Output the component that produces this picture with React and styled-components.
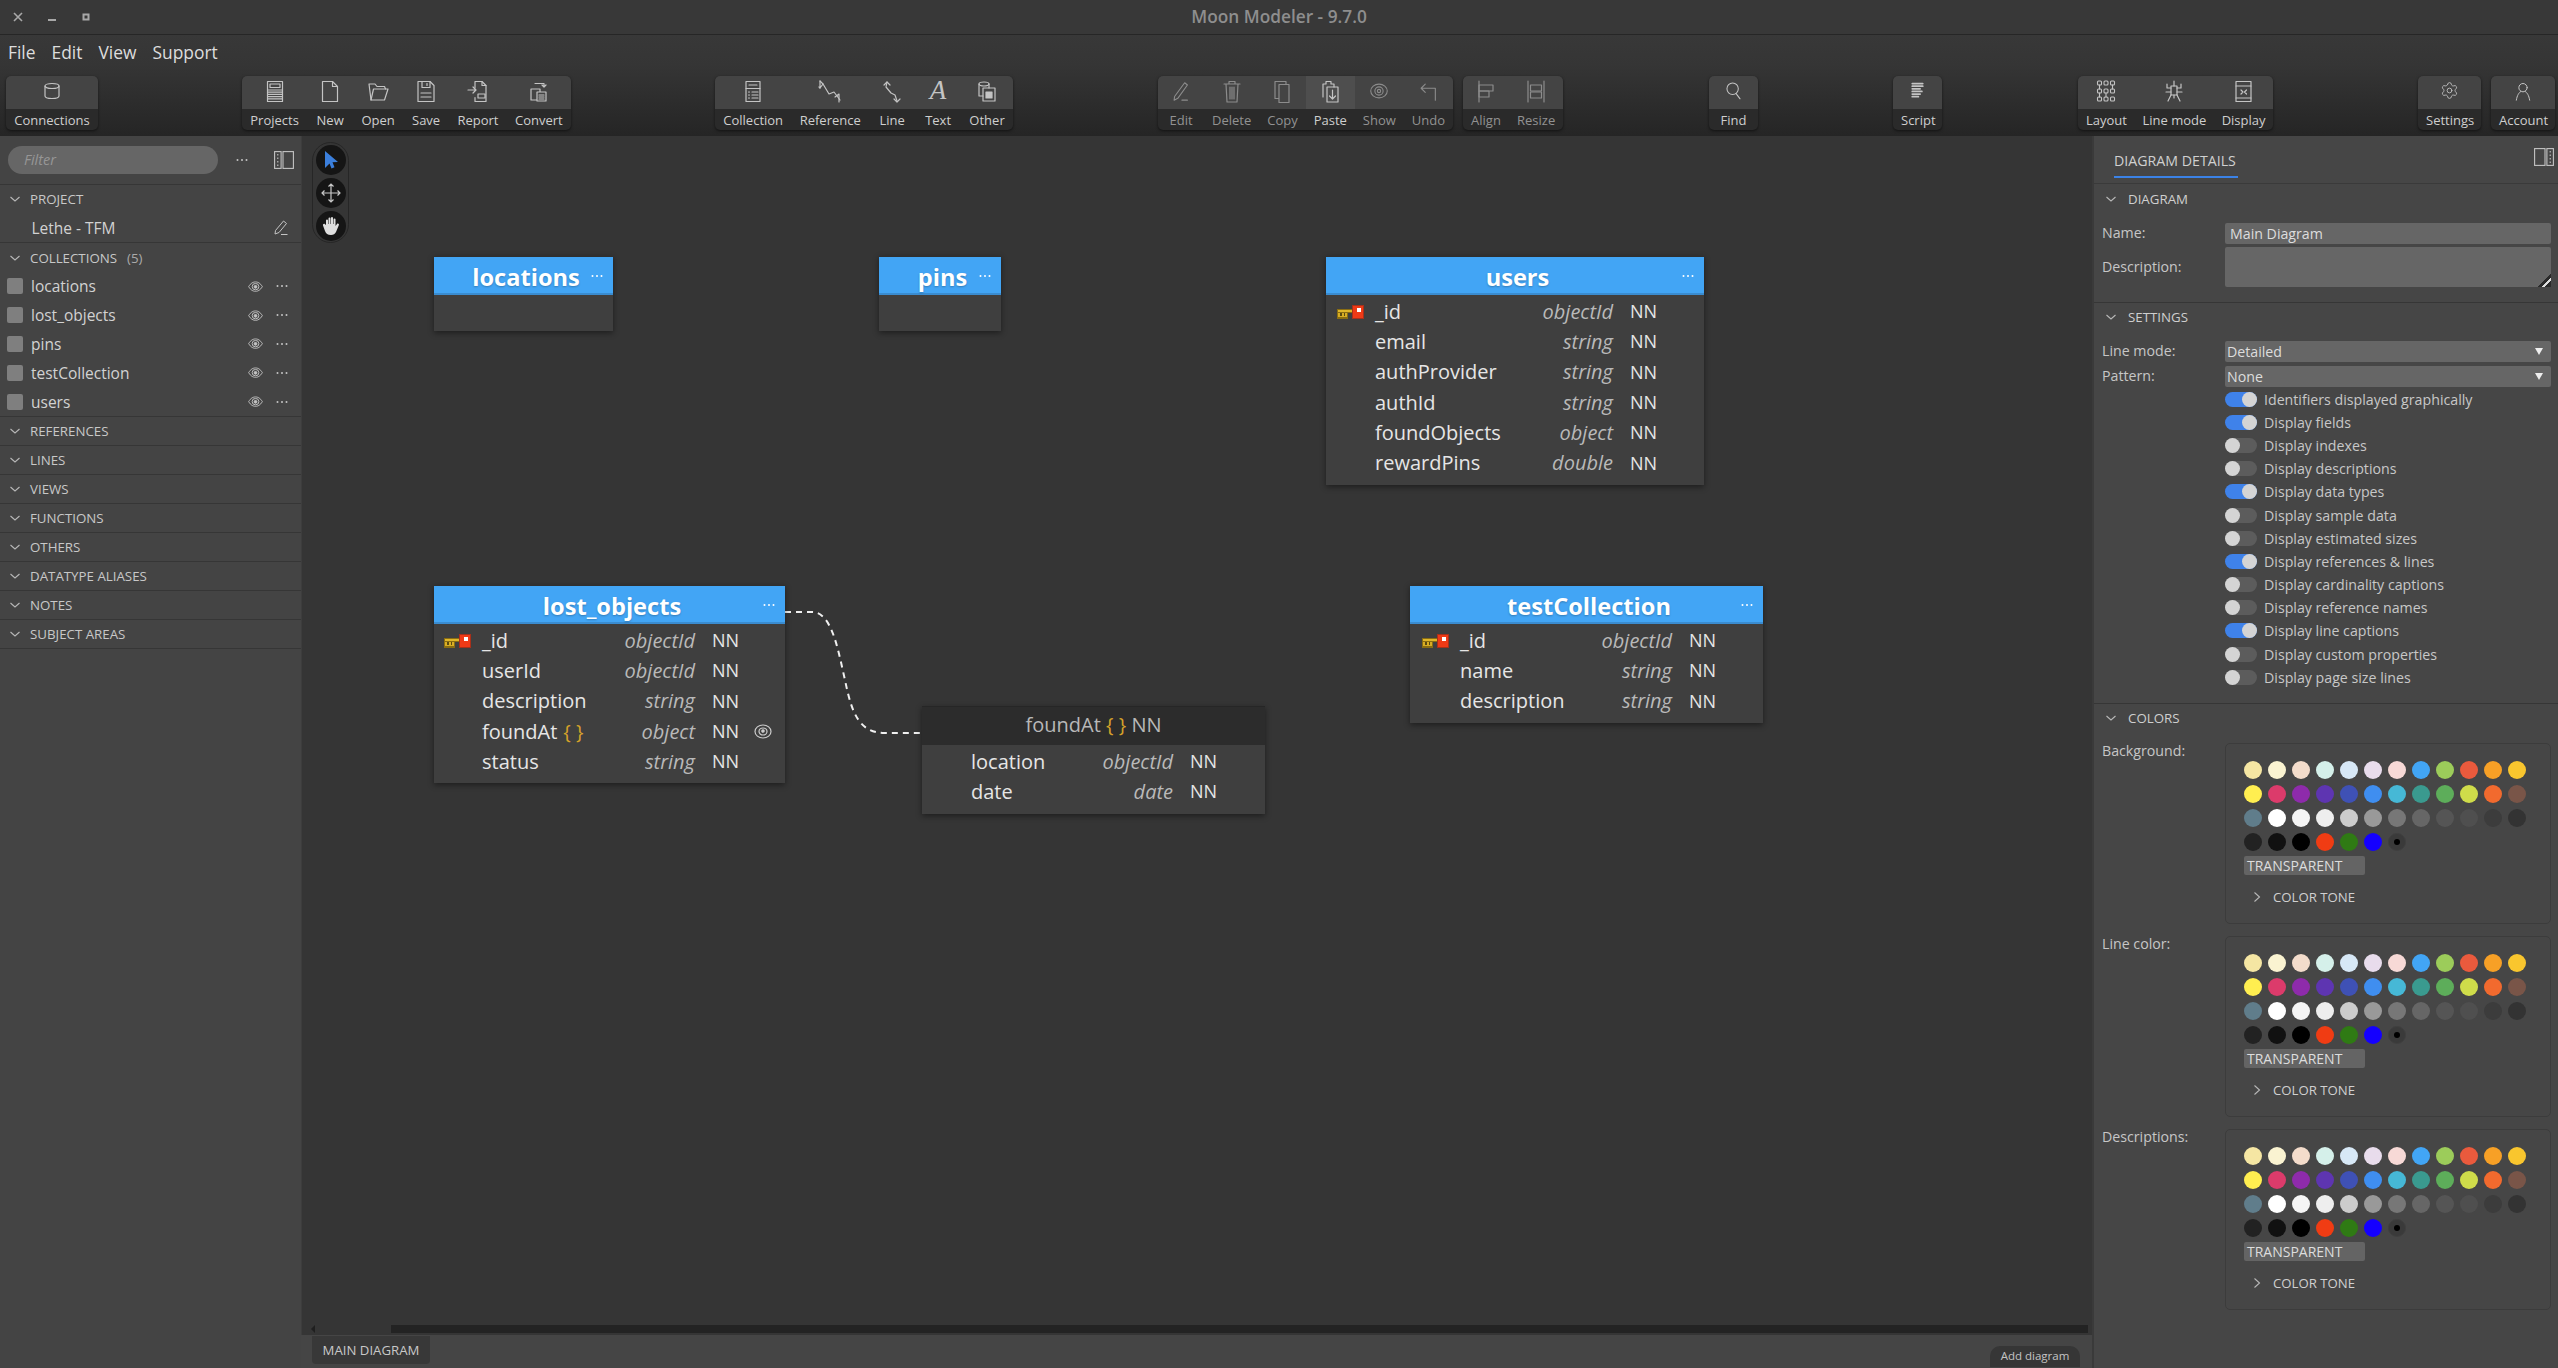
import React from 'react';
import styled, { createGlobalStyle } from 'styled-components';
import { Settings as GearIcon } from 'lucide-react';

const GlobalStyle = createGlobalStyle`
  html, body { margin: 0; height: 100%; background: #353535; overflow: hidden; }
  #root { height: 100%; }
  body { font-family: "Open Sans", "Noto Sans", sans-serif; color: #ccc; }
  * { box-sizing: border-box; }
`;

const Frame = styled.div`display:flex;flex-direction:column;width:2558px;height:1368px;overflow:hidden;`;

/* ---------- title bar ---------- */
const TitleBar = styled.div`
  height:35px;flex:none;display:grid;grid-template-columns:1fr auto 1fr;align-items:center;
  background:#383838;border-bottom:1px solid #262626;
`;
const WindowControls = styled.div`display:flex;padding-left:1px;`;
const WindowButton = styled.span`width:34px;display:flex;justify-content:center;align-items:center;height:16px;color:#a8a8a8;`;
const Title = styled.div`font-size:17.3px;font-weight:600;color:#8e8e8e;padding-bottom:2px;`;

/* ---------- menu + toolbar ---------- */
const TopBars = styled.div`flex:none;background:linear-gradient(#383838 0%,#353535 30%,#252525 100%);`;
const MenuBar = styled.div`height:36px;display:flex;align-items:center;gap:16px;padding:0 0 2px 8px;`;
const MenuItem = styled.span`font-size:17.4px;color:#ddd;`;
const Toolbar = styled.div`display:flex;align-items:flex-start;height:65px;padding:5px 0 0 6px;`;
const ToolGroup = styled.div`
  display:flex;flex:none;height:54px;margin-left:${p => p.$ml || 0}px;width:${p => p.$w}px;
  border-radius:5px;overflow:hidden;background:#2a2a2a;box-shadow:0 1px 3px rgba(0,0,0,.55);
`;
const ToolItem = styled.div`
  display:flex;flex-direction:column;flex:${p => (p.$grow ? '1 1 auto' : 'none')};min-width:46px;
`;
const ToolIcon = styled.div`
  height:33px;padding-bottom:4px;display:flex;align-items:center;justify-content:center;
  background:${p => (p.$active ? '#4e4e4e' : '#444')};
  color:${p => (p.$dim ? '#8c8c8c' : '#c4c4c4')};
`;
const ToolLabel = styled.div`
  height:21px;line-height:23.500px;padding:0 8px;text-align:center;white-space:nowrap;font-size:13px;
  color:${p => (p.$dim ? '#929292' : '#cfcfcf')};
`;
const ToolGlyphA = styled.span`font-family:"Liberation Serif",serif;font-style:italic;font-size:27px;line-height:1;color:#c4c4c4;`;

/* ---------- body ---------- */
const Body = styled.div`flex:1;display:flex;min-height:0;`;
const LeftPanel = styled.aside`width:301px;flex:none;background:#444;display:flex;flex-direction:column;`;
const FilterRow = styled.div`height:49px;display:flex;align-items:center;padding:0 7px 0 8px;border-bottom:1px solid #363636;`;
const FilterBox = styled.div`
  width:210px;height:28px;border-radius:14px;background:#666;padding-left:16px;
  font-style:italic;font-size:14.5px;line-height:28px;color:#969696;
`;
const FilterTools = styled.div`flex:1;display:flex;justify-content:space-between;align-items:center;padding-left:18px;color:#c4c4c4;`;
const TreeSection = styled.div`border-bottom:1px solid #363636;`;
const TreeHeader = styled.div`
  height:${p => (p.$open ? 28.6 : 28)}px;display:flex;align-items:center;gap:10px;padding-left:10px;
  font-size:13.3px;color:#c8c8c8;
`;
const TreeCount = styled.span`color:#aaa;`;
const TreeRow = styled.div`
  height:28.8px;display:flex;align-items:center;padding:0 13px 0 7px;font-size:15.5px;color:#d2d2d2;
`;
const ProjectName = styled.span`flex:1;padding-left:24.5px;`;
const ItemSwatch = styled.span`width:16px;height:16px;border-radius:2px;background:#7f7f7f;margin-right:8px;flex:none;`;
const ItemName = styled.span`flex:1;`;
const ItemTools = styled.span`display:flex;align-items:center;gap:13px;color:#c4c4c4;`;

/* ---------- canvas ---------- */
const CanvasColumn = styled.main`flex:1;min-width:0;display:flex;flex-direction:column;`;
const Canvas = styled.div`flex:1;position:relative;background:#353535;border-left:1px solid #3d3d3d;overflow:hidden;`;
const ToolPill = styled.div`
  position:absolute;left:10px;top:6px;width:37px;height:101px;border-radius:19px;border:1px solid #262626;
  display:flex;flex-direction:column;align-items:center;justify-content:center;gap:3px;
`;
const ToolCircle = styled.div`
  width:30px;height:30px;border-radius:50%;background:#151515;display:flex;align-items:center;justify-content:center;
`;
const LineLayer = styled.svg`position:absolute;inset:0;width:100%;height:100%;pointer-events:none;`;
const TableCard = styled.div`
  position:absolute;left:${p => p.$x}px;top:${p => p.$y}px;width:${p => p.$w}px;
  background:#3f3f3f;box-shadow:0 2px 6px rgba(0,0,0,.45);
`;
const TableHead = styled.div`
  height:39px;position:relative;display:flex;align-items:center;justify-content:center;padding:3px 0 0 5px;
  background:#42a5f5;border-top:1px solid #2f2f2f;border-bottom:2px solid #3a8cd0;
  color:#fff;font-size:23.6px;font-weight:700;text-shadow:0 1px 2px rgba(0,0,0,.25);
`;
const SubHead = styled.div`
  height:39px;padding-bottom:3px;display:flex;align-items:center;justify-content:center;background:#2c2c2c;
  border-top:1px solid #262626;font-size:20px;color:#b8b8b8;
`;
const HeadDots = styled.span`position:absolute;right:10px;top:17px;color:#fff;display:flex;`;
const TableBody = styled.div`
  padding:1px 0 7px;min-height:${p => p.$min || 0}px;
`;
const FieldRow = styled.div`
  height:30.3px;display:flex;align-items:center;position:relative;
  padding-left:${p => p.$left}px;padding-right:${p => p.$right}px;
`;
const KeyMark = styled.span`position:absolute;left:${p => p.$left - 38}px;top:9px;display:flex;`;
const FieldName = styled.span`flex:1;font-size:20px;color:#e6e6e6;white-space:nowrap;`;
const Braces = styled.span`color:#d4a12a;margin-left:${p => (p.$flush ? 0 : 6)}px;`;
const FieldType = styled.span`font-size:20px;font-style:italic;color:#b9b9b9;`;
const FieldNN = styled.span`width:27px;margin-left:17px;font-size:18px;color:#e6e6e6;flex:none;`;
const FieldEye = styled.span`position:absolute;right:13px;top:8px;color:#ccc;display:flex;`;
const ScrollBar = styled.div`position:absolute;left:89px;right:4px;bottom:2px;height:8px;background:#232323;`;
const ScrollArrow = styled.span`
  position:absolute;left:9px;bottom:2px;width:0;height:0;border:4px solid transparent;border-right:4px solid #1f1f1f;border-left:0;
`;
const TabBar = styled.div`
  height:33px;flex:none;display:flex;align-items:center;justify-content:space-between;background:#454545;padding:0 12px 0 11px;
`;
const TabButton = styled.div`
  height:28px;width:118px;margin-top:-3px;text-align:center;line-height:28px;font-size:13.2px;background:#383838;border-radius:0 0 4px 4px;color:#c8c8c8;
`;
const AddDiagram = styled.div`
  height:21px;width:90px;margin-top:10px;text-align:center;line-height:20px;font-size:11.5px;border-radius:10px 10px 0 0;background:#363636;color:#c4c4c4;
`;

/* ---------- right panel ---------- */
const RightPanel = styled.aside`width:466px;flex:none;background:#464646;border-left:2px solid #3a3a3a;display:flex;flex-direction:column;`;
const DetailTabs = styled.div`height:48px;padding-left:20px;display:flex;justify-content:space-between;border-bottom:1px solid #3a3a3a;`;
const DetailTab = styled.div`
  height:42px;padding-top:15px;width:124px;font-size:14.2px;line-height:20px;white-space:nowrap;color:#d0d0d0;border-bottom:2px solid #3b82e6;
`;
const PanelIconSlot = styled.div`padding:12px 4px 0 0;color:#c4c4c4;`;
const DetailSection = styled.section`
  padding-bottom:${p => p.$pb || 0}px;border-bottom:${p => (p.$last ? 'none' : '1px solid #363636')};
`;
const DetailHeader = styled.div`
  height:${p => p.$h || 30}px;display:flex;align-items:center;gap:12px;padding-left:12px;font-size:13.3px;color:#cfcfcf;
`;
const FieldGrid = styled.div`
  display:grid;grid-template-columns:123px 326px;padding-left:8px;margin-top:${p => p.$mt || 0}px;row-gap:${p => p.$gap || 3}px;
`;
const FieldLabel = styled.label`font-size:14.2px;color:#c6c6c6;line-height:${p => p.$lh || 20}px;`;
const TextBox = styled.input`
  height:21px;width:100%;border:0;border-radius:2px;background:#666;color:#ddd;padding:0 5px;
  font:14.2px "Open Sans",sans-serif;outline:none;
`;
const AreaBox = styled.textarea`
  height:39.5px;width:100%;border:0;border-radius:2px;background:#666;padding:0;resize:vertical;display:block;outline:none;
  &::-webkit-resizer{background:linear-gradient(135deg,transparent 55%,#2a2a2a 55%,#2a2a2a 68%,#ddd 68%,#ddd 78%,#2a2a2a 78%);}
`;
const SelectBox = styled.div`
  height:21px;display:flex;justify-content:space-between;align-items:center;border-radius:2px;background:#666;padding:0 8px 0 2px;
  font-size:14.2px;color:#ddd;
`;
const SelectArrow = styled.span`width:0;height:0;border-left:4px solid transparent;border-right:4px solid transparent;border-top:7px solid #eee;`;
const ToggleList = styled.div`grid-column:2;margin-top:-3px;`;
const ToggleRow = styled.div`height:23.2px;display:flex;align-items:center;gap:7px;font-size:14.2px;color:#c8c8c8;white-space:nowrap;`;
const ToggleTrack = styled.span`
  width:32px;height:15px;border-radius:8px;flex:none;position:relative;background:${p => (p.$on ? '#3f82ea' : '#5c5c5c')};
`;
const ToggleKnob = styled.span`
  position:absolute;top:0;left:${p => (p.$on ? 17 : 0)}px;width:15px;height:15px;border-radius:50%;background:#d4d4d4;
`;
const ColorBox = styled.div`
  height:181px;border:1px solid #3c3c3c;border-radius:5px;padding:17px 0 0 18px;
`;
const SwatchGrid = styled.div`display:grid;grid-template-columns:repeat(12,24px);grid-auto-rows:24px;`;
const Swatch = styled.span`width:18px;height:18px;border-radius:50%;background:${p => p.$c};`;
const PickerDot = styled.span`
  width:18px;height:18px;border-radius:50%;background:#3a3a3a;border:1px solid #3f3f3f;display:flex;align-items:center;justify-content:center;
  &::after{content:"";width:6px;height:6px;border-radius:50%;background:#000;}
`;
const TransparentBox = styled.div`
  width:121px;height:19px;margin-top:-1px;border-radius:2px;background:#646464;padding-left:3px;font-size:14px;line-height:19px;color:#ddd;
`;
const ToneRow = styled.div`display:flex;align-items:center;gap:11px;padding-left:8px;margin-top:12.500px;height:20px;font-size:13.2px;color:#d0d0d0;`;

/* ---------- drawn icons ---------- */
const Ico = ({ children, w = 24, h = 24, vb = '0 0 24 24', sw = 1.2 }) => (
  <svg width={w} height={h} viewBox={vb} fill="none" stroke="currentColor" strokeWidth={sw} strokeLinecap="round" strokeLinejoin="round">{children}</svg>
);
const Icons = {
  Connections: <Ico><ellipse cx="12" cy="7" rx="7" ry="2.5"/><path d="M5 7v10c0 1.600 3.200 2.500 7 2.500s7-.9 7-2.500V7"/></Ico>,
  Projects: <Ico><rect x="4.500" y="2.500" width="15" height="20"/><rect x="7" y="5" width="10" height="3.500"/><path d="M4.500 11h15M4.500 13.200h15M4.500 15.400h15M4.500 17.600h15M4.500 19.800h15"/></Ico>,
  New: <Ico><path d="M4.500 2.500h10l5 5v15h-15z"/><path d="M14.500 2.500v5h5"/></Ico>,
  Open: <Ico><path d="M5 21 3 5h6l2 2.500h7.500l1 2.500"/><path d="M5 21h13.500l3.500-11H7.500z"/></Ico>,
  Save: <Ico><path d="M4 2.500h12l4 4v16H4z"/><rect x="8" y="2.500" width="8" height="6"/><path d="M13 4.500v2"/><path d="M7 14h10M7 18h10"/></Ico>,
  Report: <Ico><path d="M9 9V2.500h7l4 4v16H9v-4"/><path d="M16 2.500v4h4"/><path d="M2 11h8M7 8l3 3-3 3"/><rect x="12" y="15" width="7" height="4"/></Ico>,
  Convert: <Ico><path d="M8 4.500h9v3M15 6l2 2 2-2"/><rect x="4" y="10" width="9" height="11"/><rect x="10" y="13" width="9" height="9" fill="#444"/><path d="M12 16h5M12 18h5M12 20h5"/></Ico>,
  Collection: <Ico><rect x="5" y="2.500" width="14" height="20"/><path d="M5 9.500h14M8 6h8"/><path d="M7.500 13h1M11 13h6M7.500 16h1M11 16h6M7.500 19h1M11 19h6"/></Ico>,
  Reference: <Ico w={30} vb="0 0 30 24"><path d="M5 2v7l3-4 6 10 5-2 6 8"/><path d="M5 2l3 3M5 9l-1-1"/><path d="M24 23v-8l-4 3"/></Ico>,
  Line: <Ico><path d="M7 3 6 8l5 6 4 2 2 6"/><path d="M4 6l3-3 3 3M14 20l3 3 3-3"/></Ico>,
  Text: <ToolGlyphA>A</ToolGlyphA>,
  Other: <Ico><ellipse cx="9" cy="5" rx="5" ry="2"/><path d="M4 5v12h4M14 5v4"/><rect x="8" y="9" width="12" height="13" /><rect x="11" y="13" width="6" height="6" fill="currentColor"/></Ico>,
  Edit: <Ico w={22} h={22}><path d="M5 18 16 3l3 2.500L8.500 20 4.500 22z"/><path d="M13 22h6"/></Ico>,
  Delete: <Ico><path d="M4 5h16M9 5V2.500h6V5M6 5l1 18h10l1-18"/><path d="M10 8v12M12 8v12M14 8v12"/></Ico>,
  Copy: <Ico><rect x="5" y="2.500" width="11" height="17"/><rect x="9" y="5.500" width="10" height="18" fill="#444"/></Ico>,
  Paste: <Ico><path d="M5 18V5h3V2.500h5V5h3v3"/><rect x="9" y="8" width="11" height="15"/><path d="M14.500 11v9M11.500 17l3 3 3-3"/></Ico>,
  Show: <Ico w={22} h={22}><ellipse cx="12" cy="12" rx="9" ry="7.500"/><circle cx="12" cy="12" r="4.500"/><circle cx="12" cy="12" r="1.800"/></Ico>,
  Undo: <Ico w={22} h={22}><path d="M20 22V9H5M9 4.500 4.500 9 9 13.500"/></Ico>,
  Align: <Ico><path d="M5 2v21"/><rect x="5" y="6" width="14" height="6"/><rect x="5" y="12" width="10" height="6"/></Ico>,
  Resize: <Ico><path d="M4 2v21M20 2v21"/><rect x="6.500" y="6" width="11" height="6"/><rect x="6.500" y="13" width="11" height="6"/></Ico>,
  Find: <Ico w={21} h={21}><circle cx="11" cy="10" r="6.500"/><path d="M15 15.500l4.500 6"/></Ico>,
  Script: <Ico w={21} h={21} sw={2}><path d="M6 4h12M6 7h12M6 10h9M6 13h11M6 16h9M6 19h7"/></Ico>,
  Layout: <Ico sw={1.100}><rect x="3.500" y="2" width="4" height="4" rx="1"/><rect x="10" y="2" width="4" height="4" rx="1"/><rect x="16.500" y="2" width="4" height="4" rx="1"/><rect x="3.500" y="10" width="4" height="4" rx="1"/><rect x="10" y="10" width="4" height="4" rx="1"/><rect x="16.500" y="10" width="4" height="4" rx="1"/><rect x="3.500" y="18" width="4" height="4" rx="1"/><rect x="10" y="18" width="4" height="4" rx="1"/><rect x="16.500" y="18" width="4" height="4" rx="1"/><path d="M5.500 6v4M18.500 6v4M5.500 14v4M12 14v4"/></Ico>,
  'Line mode': <Ico><rect x="9" y="7" width="6" height="9"/><path d="M12 2v5M9 9H5V5M15 9h4V5M9 13H4M15 13h5M9 16l-3 6M15 16l3 6M12 16v3"/></Ico>,
  Display: <Ico><rect x="5" y="2.500" width="15" height="20"/><path d="M5 7h15M5 19h15M10 11l2 2-2 2M15.500 11l-2 2 2 2"/></Ico>,
  Settings: <GearIcon size={19} strokeWidth={1.100}/>,
  Account: <Ico w={20} h={20}><circle cx="12" cy="8" r="5"/><path d="M4 23c1-6 3-9 5.500-10.500M20 23c-1-6-3-9-5.500-10.500"/></Ico>,
};

const Chevron = ({ right }) => (
  <svg width="10" height="10" viewBox="0 0 10 10" fill="none" stroke="#b8b8b8" strokeWidth="1.100" style={{ flex: 'none' }}>
    {right ? <path d="M2.500 0.500 7.500 5 2.500 9.500"/> : <path d="M0.500 3 5 7 9.500 3"/>}
  </svg>
);
const Dots = ({ color = 'currentColor' }) => (
  <svg width="12" height="4" viewBox="0 0 12 4" fill={color}><circle cx="1.500" cy="2" r="1"/><circle cx="6" cy="2" r="1"/><circle cx="10.500" cy="2" r="1"/></svg>
);
const Eye = ({ size = 15 }) => (
  <svg width={size} height={size * 0.75} viewBox="0 0 16 12" fill="none" stroke="currentColor" strokeWidth="1"><path d="M.7 6C3 2.200 5.400 1 8 1s5 1.200 7.300 5C13 9.800 10.600 11 8 11S3 9.800.7 6z"/><ellipse cx="8" cy="6" rx="3.600" ry="3.400"/><circle cx="8" cy="6.200" r="1.500" fill="currentColor"/></svg>
);
const RoundEye = () => (
  <svg width="18" height="15" viewBox="0 0 18 15" fill="none" stroke="currentColor" strokeWidth="1.200"><ellipse cx="9" cy="7.500" rx="8" ry="6.500"/><ellipse cx="9" cy="7.500" rx="4" ry="3.500"/><circle cx="9" cy="7" r="1.200" fill="currentColor"/></svg>
);
const PanelIcon = ({ flip }) => (
  <svg width="20" height="18" viewBox="0 0 20 18" fill="none" stroke="currentColor" strokeWidth="1.100" style={flip ? { transform: 'scaleX(-1)' } : undefined}>
    <rect x=".6" y=".6" width="6.500" height="16.800"/><rect x="9" y=".6" width="10.400" height="16.800"/>
    <path d="M3.800 3v1.500M3.800 6.500V8M3.800 10v1.500M3.800 13.500v1.500"/>
  </svg>
);
const KeyIcon = () => (
  <svg width="27" height="15" viewBox="0 0 27 15" shapeRendering="crispEdges">
    <rect x="0" y="4" width="16" height="4" fill="#8a6d12"/>
    <rect x="1" y="5" width="15" height="2" fill="#e0b72a"/>
    <rect x="0" y="8" width="11" height="6" fill="#8a6d12"/>
    <rect x="1" y="8" width="9" height="4" fill="#d8ad24"/>
    <rect x="3" y="8" width="2" height="3" fill="#5a4a10"/><rect x="7" y="8" width="1" height="3" fill="#5a4a10"/>
    <rect x="15" y="0" width="12" height="14" fill="#a8301a"/>
    <rect x="16" y="1" width="10" height="12" fill="#ee3a16"/>
    <rect x="20" y="3" width="3.500" height="3.500" fill="#fff"/>
  </svg>
);
const Pencil = () => (
  <svg width="14" height="15" viewBox="0 0 14 15" fill="none" stroke="currentColor" strokeWidth="1"><path d="M1.500 10.500 9.500 1l3 2.500L5 12.500l-4 1.500z"/><path d="M7 14.500h6.500"/></svg>
);

/* ---------- data ---------- */
const toolbar = [
  { ml: 0, w: 92, items: [{ n: 'Connections' }] },
  { ml: 144, w: 329, items: [{ n: 'Projects' }, { n: 'New' }, { n: 'Open' }, { n: 'Save' }, { n: 'Report' }, { n: 'Convert' }] },
  { ml: 144, w: 298, items: [{ n: 'Collection' }, { n: 'Reference' }, { n: 'Line' }, { n: 'Text' }, { n: 'Other' }] },
  { ml: 145, w: 295, items: [{ n: 'Edit', d: 1 }, { n: 'Delete', d: 1 }, { n: 'Copy', d: 1 }, { n: 'Paste', a: 1 }, { n: 'Show', d: 1 }, { n: 'Undo', d: 1 }] },
  { ml: 10, w: 100, items: [{ n: 'Align', d: 1 }, { n: 'Resize', d: 1 }] },
  { ml: 146, w: 49, items: [{ n: 'Find' }] },
  { ml: 135, w: 49, items: [{ n: 'Script' }] },
  { ml: 136, w: 195, items: [{ n: 'Layout' }, { n: 'Line mode' }, { n: 'Display' }] },
  { ml: 145, w: 63, items: [{ n: 'Settings' }] },
  { ml: 10, w: 64, items: [{ n: 'Account' }] },
];
const collections = ['locations', 'lost_objects', 'pins', 'testCollection', 'users'];
const closedSections = ['REFERENCES', 'LINES', 'VIEWS', 'FUNCTIONS', 'OTHERS', 'DATATYPE ALIASES', 'NOTES', 'SUBJECT AREAS'];
const tables = [
  { name: 'locations', x: 132, y: 120, w: 179, min: 36, fields: [] },
  { name: 'pins', x: 577, y: 120, w: 122, min: 36, fields: [] },
  { name: 'users', x: 1024, y: 120, w: 378, left: 49, right: 47, fields: [
    ['_id', 'objectId', 1], ['email', 'string'], ['authProvider', 'string'], ['authId', 'string'], ['foundObjects', 'object'], ['rewardPins', 'double'],
  ] },
  { name: 'lost_objects', x: 132, y: 449, w: 351, left: 48, right: 46, fields: [
    ['_id', 'objectId', 1], ['userId', 'objectId'], ['description', 'string'], ['foundAt', 'object', 0, 1], ['status', 'string'],
  ] },
  { name: 'testCollection', x: 1108, y: 449, w: 353, left: 50, right: 47, fields: [
    ['_id', 'objectId', 1], ['name', 'string'], ['description', 'string'],
  ] },
];
const subFields = [['location', 'objectId'], ['date', 'date']];
const toggles = [
  ['Identifiers displayed graphically', 1], ['Display fields', 1], ['Display indexes', 0], ['Display descriptions', 0],
  ['Display data types', 1], ['Display sample data', 0], ['Display estimated sizes', 0], ['Display references & lines', 1],
  ['Display cardinality captions', 0], ['Display reference names', 0], ['Display line captions', 1],
  ['Display custom properties', 0], ['Display page size lines', 0],
];
const palette = [
  '#f5e6a3', '#faf3d1', '#f3dccb', '#d5f0ea', '#d7e8f6', '#e8dcec', '#f7d9d6', '#42a5f5', '#9ccc5a', '#ea5a3d', '#f7a026', '#f9c62e',
  '#ffee50', '#dc3b6b', '#8e2bab', '#5e35b1', '#3f51b5', '#3f8ef0', '#46b8d6', '#3a9a8f', '#5dad5a', '#cfdc4a', '#f26a2e', '#795548',
  '#607d8b', '#ffffff', '#f5f5f5', '#eeeeee', '#cccccc', '#999999', '#777777', '#666666', '#555555', '#4f4f4f', '#3c3c3c', '#333333',
  '#222222', '#111111', '#000000', '#f03c13', '#2f7a14', '#1400ff',
];

const ColorField = ({ label }) => (
  <>
    <FieldLabel $lh={16}>{label}</FieldLabel>
    <ColorBox>
      <SwatchGrid>
        {palette.map((c, i) => <Swatch key={i} $c={c} />)}
        <PickerDot />
      </SwatchGrid>
      <TransparentBox>TRANSPARENT</TransparentBox>
      <ToneRow><Chevron right />COLOR TONE</ToneRow>
    </ColorBox>
  </>
);

export default function App() {
  return (
    <Frame>
      <GlobalStyle />
      <TitleBar>
        <WindowControls>
          <WindowButton><svg width="10" height="10" viewBox="0 0 10 10" stroke="currentColor" strokeWidth="1.600"><path d="M1 1l8 8M9 1l-8 8"/></svg></WindowButton>
          <WindowButton><svg width="10" height="10" viewBox="0 0 10 10" fill="currentColor"><rect x="1" y="7" width="8" height="2"/></svg></WindowButton>
          <WindowButton><svg width="8" height="8" viewBox="0 0 8 8" fill="none" stroke="currentColor" strokeWidth="2"><rect x="1.500" y="1.500" width="5" height="5"/></svg></WindowButton>
        </WindowControls>
        <Title>Moon Modeler - 9.7.0</Title>
        <span />
      </TitleBar>
      <TopBars>
        <MenuBar>
          {['File', 'Edit', 'View', 'Support'].map(m => <MenuItem key={m}>{m}</MenuItem>)}
        </MenuBar>
        <Toolbar>
          {toolbar.map(g => (
            <ToolGroup key={g.items[0].n} $ml={g.ml} $w={g.w}>
              {g.items.map(it => (
                <ToolItem key={it.n} $grow>
                  <ToolIcon $dim={it.d} $active={it.a}>{Icons[it.n]}</ToolIcon>
                  <ToolLabel $dim={it.d}>{it.n}</ToolLabel>
                </ToolItem>
              ))}
            </ToolGroup>
          ))}
        </Toolbar>
      </TopBars>
      <Body>
        <LeftPanel>
          <FilterRow>
            <FilterBox>Filter</FilterBox>
            <FilterTools><Dots /><PanelIcon /></FilterTools>
          </FilterRow>
          <TreeSection>
            <TreeHeader $open><Chevron />PROJECT</TreeHeader>
            <TreeRow><ProjectName>Lethe - TFM</ProjectName><ItemTools><Pencil /></ItemTools></TreeRow>
          </TreeSection>
          <TreeSection>
            <TreeHeader $open><Chevron />COLLECTIONS<TreeCount>(5)</TreeCount></TreeHeader>
            {collections.map(c => (
              <TreeRow key={c}>
                <ItemSwatch /><ItemName>{c}</ItemName>
                <ItemTools><Eye /><Dots /></ItemTools>
              </TreeRow>
            ))}
          </TreeSection>
          {closedSections.map(s => (
            <TreeSection key={s}><TreeHeader><Chevron />{s}</TreeHeader></TreeSection>
          ))}
        </LeftPanel>
        <CanvasColumn>
          <Canvas>
            <ToolPill>
              <ToolCircle><svg width="16" height="20" viewBox="0 0 16 20" fill="#3b7fdc"><path d="M2 1v17l4.500-4.500 2 5 3-1.200-2-5 5.500-.3z"/></svg></ToolCircle>
              <ToolCircle><svg width="20" height="20" viewBox="0 0 20 20" fill="none" stroke="#c8c8c8" strokeWidth="1.200"><path d="M10 1v18M1 10h18M7.500 3.500 10 1l2.500 2.500M7.500 16.500 10 19l2.500-2.500M3.500 7.500 1 10l2.500 2.500M16.500 7.500 19 10l-2.500 2.500"/></svg></ToolCircle>
              <ToolCircle><svg width="18" height="19" viewBox="0 0 18 19" fill="#dedede"><path d="M4 9V4.500a1 1 0 0 1 2 0V8h.5V2.500a1 1 0 0 1 2 0V8H9V2a1 1 0 0 1 2 0v6h.5V3.500a1 1 0 0 1 2 0V10l1.500-2c.8-1 2.500 0 1.800 1.200L14 16c-1 2-2.500 3-5 3-3.500 0-5-1.500-6-4L1 9.500C.5 8 2.200 7.200 3 8.200z"/></svg></ToolCircle>
            </ToolPill>
            <LineLayer>
              <path d="M483 476 H510 C530 476 536 514 543 544 C550 579 558 597 583 597 H620" fill="none" stroke="#f0f0f0" strokeWidth="2" strokeDasharray="6 5"/>
            </LineLayer>
            {tables.map(t => (
              <TableCard key={t.name} $x={t.x} $y={t.y} $w={t.w}>
                <TableHead>{t.name}<HeadDots><Dots color="#fff" /></HeadDots></TableHead>
                <TableBody $min={t.min}>
                  {t.fields.map(f => (
                    <FieldRow key={f[0]} $left={t.left} $right={t.right}>
                      {f[2] ? <KeyMark $left={t.left}><KeyIcon /></KeyMark> : null}
                      <FieldName>{f[0]}{f[3] ? <Braces>{'{ }'}</Braces> : null}</FieldName>
                      <FieldType>{f[1]}</FieldType>
                      <FieldNN>NN</FieldNN>
                      {f[3] ? <FieldEye><RoundEye /></FieldEye> : null}
                    </FieldRow>
                  ))}
                </TableBody>
              </TableCard>
            ))}
            <TableCard $x={620} $y={570} $w={343}>
              <SubHead><span>foundAt <Braces $flush>{'{ }'}</Braces> NN</span></SubHead>
              <TableBody>
                {subFields.map(f => (
                  <FieldRow key={f[0]} $left={49} $right={48}>
                    <FieldName>{f[0]}</FieldName>
                    <FieldType>{f[1]}</FieldType>
                    <FieldNN>NN</FieldNN>
                  </FieldRow>
                ))}
              </TableBody>
            </TableCard>
            <ScrollArrow />
            <ScrollBar />
          </Canvas>
          <TabBar>
            <TabButton>MAIN DIAGRAM</TabButton>
            <AddDiagram>Add diagram</AddDiagram>
          </TabBar>
        </CanvasColumn>
        <RightPanel>
          <DetailTabs>
            <DetailTab>DIAGRAM DETAILS</DetailTab>
            <PanelIconSlot><PanelIcon flip /></PanelIconSlot>
          </DetailTabs>
          <DetailSection $pb={15}>
            <DetailHeader><Chevron />DIAGRAM</DetailHeader>
            <FieldGrid $mt={9}>
              <FieldLabel $lh={20}>Name:</FieldLabel>
              <TextBox readOnly value="Main Diagram" />
              <FieldLabel $lh={39}>Description:</FieldLabel>
              <AreaBox readOnly />
            </FieldGrid>
          </DetailSection>
          <DetailSection $pb={14}>
            <DetailHeader $h={28}><Chevron />SETTINGS</DetailHeader>
            <FieldGrid $mt={10} $gap={4}>
              <FieldLabel>Line mode:</FieldLabel>
              <SelectBox>Detailed<SelectArrow /></SelectBox>
              <FieldLabel>Pattern:</FieldLabel>
              <SelectBox>None<SelectArrow /></SelectBox>
              <ToggleList>
                {toggles.map(([label, on]) => (
                  <ToggleRow key={label}>
                    <ToggleTrack $on={on}><ToggleKnob $on={on} /></ToggleTrack>{label}
                  </ToggleRow>
                ))}
              </ToggleList>
            </FieldGrid>
          </DetailSection>
          <DetailSection $last>
            <DetailHeader $h={28}><Chevron />COLORS</DetailHeader>
            <FieldGrid $mt={11} $gap={12}>
              <ColorField label="Background:" />
              <ColorField label="Line color:" />
              <ColorField label="Descriptions:" />
            </FieldGrid>
          </DetailSection>
        </RightPanel>
      </Body>
    </Frame>
  );
}
